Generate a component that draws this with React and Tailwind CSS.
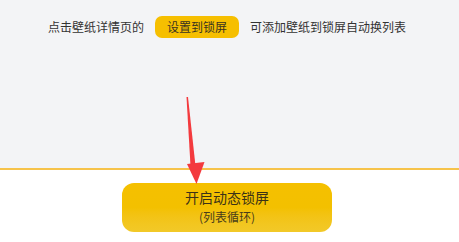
export default function App() {
  return (
    <div
      className="relative w-[459px] h-[242px] bg-white overflow-hidden"
      style={{ fontFamily: '"Noto Sans CJK SC", "Liberation Sans", sans-serif' }}
    >
      <div className="h-[168px] bg-[#f3f4f6] pt-[16px]">
        <div className="flex items-center text-[12px] text-[#333333] leading-none">
          <span className="ml-[48px]">点击壁纸详情页的</span>
          <span className="ml-[11px] w-[84px] h-[22px] rounded-[7px] bg-[#f6bf00] flex items-center justify-center text-[#3a3320]">
            设置到锁屏
          </span>
          <span className="ml-[11px]">可添加壁纸到锁屏自动换列表</span>
        </div>
      </div>
      <div className="h-[2px] bg-[#f6c34a]" />

      <div className="flex justify-center pt-[13px] pr-[5px]">
        <button className="w-[210px] h-[49px] rounded-[12px] bg-gradient-to-b from-[#f5c000] via-[#f3c000] to-[#f2c928] flex flex-col items-center justify-start pt-[6px] gap-[5px] text-[#3b3217]">
          <span className="text-[14px] leading-[16px]">开启动态锁屏</span>
          <span className="text-[12px] leading-[14px] text-[#4a3d1a]">(列表循环)</span>
        </button>
      </div>

      <svg
        className="absolute left-0 top-0 pointer-events-none"
        width="459"
        height="242"
        viewBox="0 0 459 242"
      >
        <polygon points="186.5,97 188,97 195.5,166 190.5,166" fill="#f33a3e" />
        <polygon points="187,164 204.5,162 196.5,184" fill="#f33a3e" />
      </svg>
    </div>
  );
}
